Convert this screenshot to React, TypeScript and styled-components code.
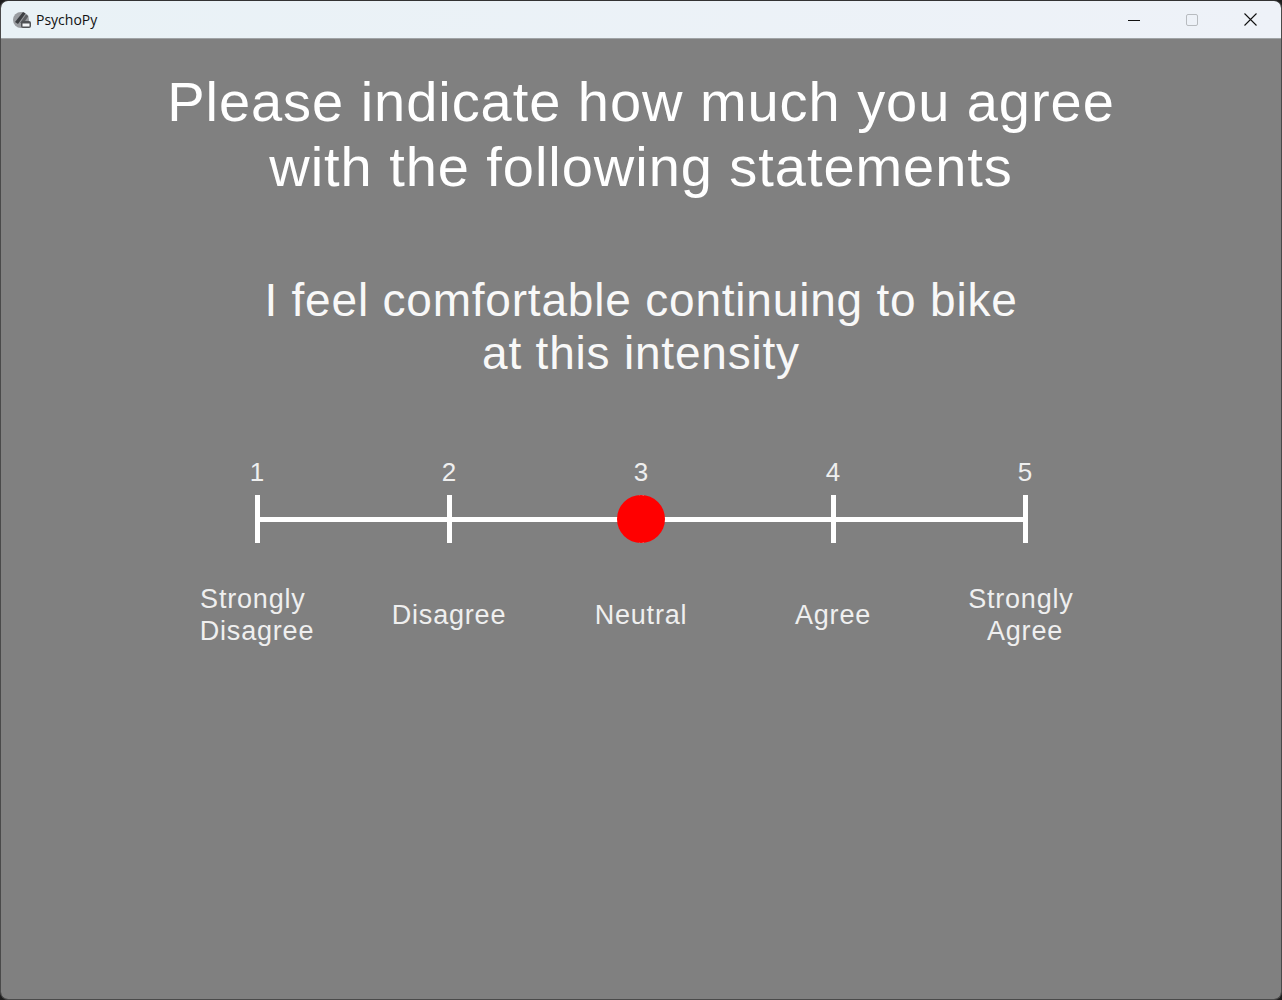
import { FC } from 'react';
import styled, { createGlobalStyle } from 'styled-components';

const GlobalStyle = createGlobalStyle`
  html, body {
    margin: 0;
    padding: 0;
    background: #1d1d1d;
  }
`;

const Window = styled.div`
  width: 1282px;
  height: 1000px;
  box-sizing: border-box;
  display: flex;
  flex-direction: column;
  border-radius: 8px;
  overflow: hidden;
  border: 1px solid #4a4a4a;
  border-top-color: #333;
`;

const TitleBar = styled.header`
  flex: 0 0 37px;
  display: flex;
  align-items: center;
  justify-content: space-between;
  background: linear-gradient(90deg, #e9f2f6, #eef2f8);
`;

const TitleLeft = styled.div`
  display: flex;
  align-items: center;
  gap: 4px;
  padding-left: 11px;
  font-family: 'Segoe UI', 'Open Sans', 'Noto Sans', sans-serif;
  font-size: 14px;
  color: #111;
`;

const Controls = styled.div`
  display: flex;
  align-items: center;
  height: 100%;
  padding-right: 1px;
`;

const ControlButton = styled.div`
  width: 58px;
  height: 100%;
  display: flex;
  align-items: center;
  justify-content: center;
`;

const CloseButton = styled(ControlButton)`
  width: 59px;
`;

const Stage = styled.main`
  flex: 1;
  background: #808080;
  border-top: 1px solid #a0a4a6;
  color: #fff;
  font-family: 'Liberation Sans', Arial, sans-serif;
  text-align: center;
  display: flex;
  flex-direction: column;
  align-items: center;
`;

const Heading = styled.h1`
  margin: 30px 0 0;
  font-size: 56px;
  font-weight: 400;
  line-height: 65px;
  letter-spacing: 0.95px;
`;

const Statement = styled.p`
  margin: 75px 0 0;
  font-size: 46px;
  line-height: 53px;
  letter-spacing: 0.8px;
  color: #f8f8f8;
`;

const Scale = styled.section`
  width: 960px;
  margin: 75px 0 0;
  display: grid;
  grid-template-columns: repeat(5, 192px);
`;

const TickNumber = styled.div`
  padding-top: 1px;
  font-size: 26px;
  line-height: 32px;
  color: #efefef;
`;

const TrackCell = styled.div<{ $first: boolean; $last: boolean }>`
  position: relative;
  height: 48px;
  margin-top: 7px;
  display: flex;
  align-items: center;
  justify-content: center;

  &::before {
    content: '';
    position: absolute;
    top: 22px;
    height: 5px;
    left: ${(p) => (p.$first ? '50%' : '0')};
    right: ${(p) => (p.$last ? '50%' : '0')};
    background: #fff;
  }
`;

const Tick = styled.div`
  position: relative;
  width: 5px;
  height: 48px;
  background: #fff;
`;

const Marker = styled.div`
  position: absolute;
  top: 0;
  left: 72px;
  width: 48px;
  height: 48px;
  border-radius: 50%;
  background: #ff0000;
`;

const ScaleLabel = styled.div`
  height: 64px;
  margin-top: 40px;
  display: flex;
  align-items: center;
  justify-content: center;
  font-size: 27px;
  line-height: 32px;
  letter-spacing: 0.8px;
  color: #efefef;
  white-space: pre;
`;

const AppIcon: FC = () => (
  <svg width="20" height="20" viewBox="0 0 20 20">
    <circle cx="9" cy="10" r="8" fill="#9a9da1" />
    <path d="M3 12 L11 2 L13.5 3.5 L6 14 Z" fill="#3c3f42" />
    <path d="M8 13 L14 4.5 L16.5 6 L12 12.5 Z" fill="#5c5f62" />
    <rect x="9" y="11" width="10" height="7" rx="2" fill="#4f5255" />
    <rect x="10.5" y="13.5" width="7" height="3" fill="#f4f6f8" />
  </svg>
);

const points = [
  { value: 1, label: 'Strongly \nDisagree' },
  { value: 2, label: 'Disagree' },
  { value: 3, label: 'Neutral', selected: true },
  { value: 4, label: 'Agree' },
  { value: 5, label: 'Strongly \nAgree' },
];

const App: FC = () => {
  return (
    <Window>
      <GlobalStyle />
      <TitleBar>
        <TitleLeft>
          <AppIcon />
          PsychoPy
        </TitleLeft>
        <Controls>
          <ControlButton>
            <svg width="12" height="12" viewBox="0 0 12 12">
              <path d="M0 6.5 H12" stroke="#111" strokeWidth="1" />
            </svg>
          </ControlButton>
          <ControlButton>
            <svg width="12" height="12" viewBox="0 0 12 12">
              <rect x="0.5" y="0.5" width="11" height="11" rx="1.5" fill="none" stroke="#b8bcc0" />
            </svg>
          </ControlButton>
          <CloseButton>
            <svg width="13" height="13" viewBox="0 0 13 13">
              <path d="M0.5 0.5 L12.5 12.5 M12.5 0.5 L0.5 12.5" stroke="#111" strokeWidth="1.1" />
            </svg>
          </CloseButton>
        </Controls>
      </TitleBar>
      <Stage>
        <Heading>
          Please indicate how much you agree
          <br />
          with the following statements
        </Heading>
        <Statement>
          I feel comfortable continuing to bike
          <br />
          at this intensity
        </Statement>
        <Scale>
          {points.map((el) => (
            <TickNumber key={el.value}>{el.value}</TickNumber>
          ))}
          {points.map((el, i) => (
            <TrackCell key={el.value} $first={i === 0} $last={i === points.length - 1}>
              <Tick />
              {el.selected && <Marker />}
            </TrackCell>
          ))}
          {points.map((el) => (
            <ScaleLabel key={el.value}>{el.label}</ScaleLabel>
          ))}
        </Scale>
      </Stage>
    </Window>
  );
};

export default App;
